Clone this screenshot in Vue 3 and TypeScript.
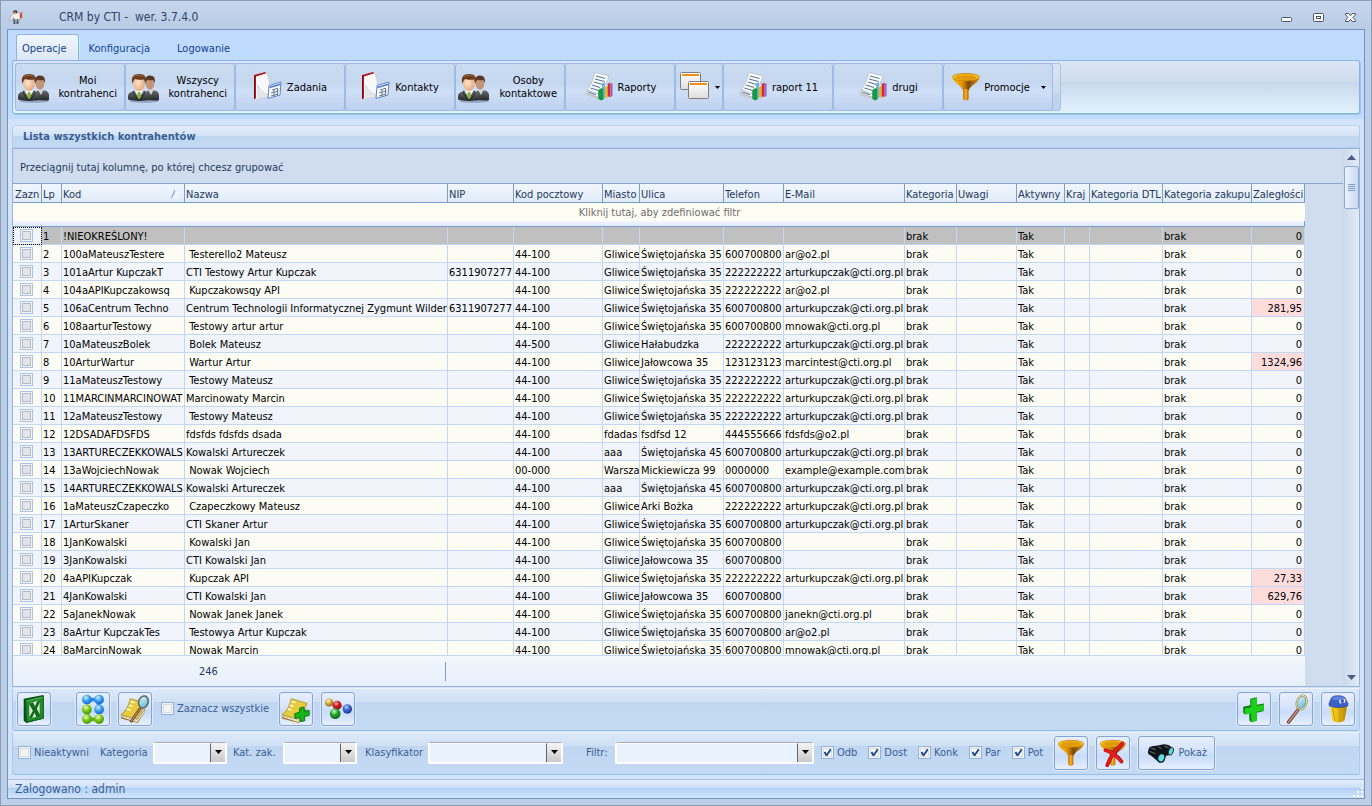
<script setup lang="ts">
import { ref } from 'vue'

interface Column { title: string; width: number }
interface RibbonItem { icon: string; lines: string[]; menu?: boolean; kind?: string }

const tabs = ['Operacje', 'Konfiguracja', 'Logowanie']
const activeTab = ref('Operacje')

const ribbon: RibbonItem[] = [
  { icon: 'people', lines: ['Moi', 'kontrahenci'], kind: 'wide' },
  { icon: 'people', lines: ['Wszyscy', 'kontrahenci'], kind: 'wide' },
  { icon: 'notebook', lines: ['Zadania'] },
  { icon: 'notebook', lines: ['Kontakty'] },
  { icon: 'people', lines: ['Osoby', 'kontaktowe'], kind: 'wide' },
  { icon: 'report', lines: ['Raporty'] },
  { icon: 'windows', lines: [], menu: true, kind: 'slim' },
  { icon: 'report', lines: ['raport 11'] },
  { icon: 'report', lines: ['drugi'] },
  { icon: 'funnel', lines: ['Promocje'], menu: true },
]

const columns: Column[] = [
  { title: 'Zazn', width: 29 },
  { title: 'Lp', width: 20 },
  { title: 'Kod', width: 123 },
  { title: 'Nazwa', width: 263 },
  { title: 'NIP', width: 66 },
  { title: 'Kod pocztowy', width: 89 },
  { title: 'Miasto', width: 37 },
  { title: 'Ulica', width: 84 },
  { title: 'Telefon', width: 60 },
  { title: 'E-Mail', width: 121 },
  { title: 'Kategoria', width: 52 },
  { title: 'Uwagi', width: 60 },
  { title: 'Aktywny', width: 48 },
  { title: 'Kraj', width: 25 },
  { title: 'Kategoria DTL', width: 73 },
  { title: 'Kategoria zakupu', width: 89 },
  { title: 'Zaległości', width: 53 },
]

const SW = 'Świętojańska 35'
const AK = 'arturkupczak@cti.org.pl'
const T2 = '222222222'
const T6 = '600700800'

// kod, nazwa, nip, kod pocztowy, miasto, ulica, telefon, e-mail, zaległości
const source: string[][] = [
  ['!NIEOKREŚLONY!', '', '', '', '', '', '', '', '0'],
  ['100aMateuszTestere', ' Testerello2 Mateusz', '', '44-100', 'Gliwice', SW, T6, 'ar@o2.pl', '0'],
  ['101aArtur KupczakT', 'CTI Testowy Artur Kupczak', '6311907277', '44-100', 'Gliwice', SW, T2, AK, '0'],
  ['104aAPIKupczakowsq', ' Kupczakowsqy API', '', '44-100', 'Gliwice', SW, T2, 'ar@o2.pl', '0'],
  ['106aCentrum Techno', 'Centrum Technologii Informatycznej Zygmunt Wilder', '6311907277', '44-100', 'Gliwice', SW, T6, AK, '281,95'],
  ['108aarturTestowy', ' Testowy artur artur', '', '44-100', 'Gliwice', SW, T6, 'mnowak@cti.org.pl', '0'],
  ['10aMateuszBolek', ' Bolek Mateusz', '', '44-500', 'Gliwice', 'Hałabudzka', T2, AK, '0'],
  ['10ArturWartur', ' Wartur Artur', '', '44-100', 'Gliwice', 'Jałowcowa 35', '123123123', 'marcintest@cti.org.pl', '1324,96'],
  ['11aMateuszTestowy', ' Testowy Mateusz', '', '44-100', 'Gliwice', SW, T2, AK, '0'],
  ['11MARCINMARCINOWAT', 'Marcinowaty Marcin', '', '44-100', 'Gliwice', SW, T2, AK, '0'],
  ['12aMateuszTestowy', ' Testowy Mateusz', '', '44-100', 'Gliwice', SW, T2, AK, '0'],
  ['12DSADAFDSFDS', 'fdsfds fdsfds dsada', '', '44-100', 'fdadas', 'fsdfsd 12', '444555666', 'fdsfds@o2.pl', '0'],
  ['13ARTURECZEKKOWALS', 'Kowalski Artureczek', '', '44-100', 'aaa', 'Świętojańska 45', T6, AK, '0'],
  ['13aWojciechNowak', ' Nowak Wojciech', '', '00-000', 'Warsza', 'Mickiewicza 99', '0000000', 'example@example.com', '0'],
  ['14ARTURECZEKKOWALS', 'Kowalski Artureczek', '', '44-100', 'aaa', 'Świętojańska 45', T6, AK, '0'],
  ['1aMateuszCzapeczko', ' Czapeczkowy Mateusz', '', '44-100', 'Gliwice', 'Arki Bożka', T2, AK, '0'],
  ['1ArturSkaner', 'CTI Skaner Artur', '', '44-100', 'Gliwice', SW, T6, AK, '0'],
  ['1JanKowalski', ' Kowalski Jan', '', '44-100', 'Gliwice', SW, T6, '', '0'],
  ['3JanKowalski', 'CTI Kowalski Jan', '', '44-100', 'Gliwice', 'Jałowcowa 35', T6, '', '0'],
  ['4aAPIKupczak', ' Kupczak API', '', '44-100', 'Gliwice', SW, T2, AK, '27,33'],
  ['4JanKowalski', 'CTI Kowalski Jan', '', '44-100', 'Gliwice', 'Jałowcowa 35', T6, '', '629,76'],
  ['5aJanekNowak', ' Nowak Janek Janek', '', '44-100', 'Gliwice', SW, T6, 'janekn@cti.org.pl', '0'],
  ['8aArtur KupczakTes', ' Testowya Artur Kupczak', '', '44-100', 'Gliwice', SW, T6, 'ar@o2.pl', '0'],
  ['8aMarcinNowak', ' Nowak Marcin', '', '44-100', 'Gliwice', SW, T6, 'mnowak@cti.org.pl', '0'],
]

const rows = source.map((r, i) => ({
  cells: [String(i + 1), ...r.slice(0, 8), 'brak', '', 'Tak', '', '', 'brak'],
  debt: r[8],
}))

const combos = [
  { label: 'Kategoria', kind: 'short' },
  { label: 'Kat. zak.', kind: 'short' },
  { label: 'Klasyfikator', kind: 'medium' },
  { label: 'Filtr:', kind: 'long' },
]
const kinds = ref([
  { label: 'Odb', on: true },
  { label: 'Dost', on: true },
  { label: 'Konk', on: true },
  { label: 'Par', on: true },
  { label: 'Pot', on: true },
])
</script>

<template>
  <svg class="sprite" aria-hidden="true">
    <defs>
      <linearGradient id="g-gold" x1="0" x2="1" y1="0" y2="0">
        <stop offset="0" stop-color="#f7b90c" /><stop offset=".35" stop-color="#e89508" /><stop offset=".6" stop-color="#7a4a08" /><stop offset="1" stop-color="#e8960c" />
      </linearGradient>
      <linearGradient id="g-rim" x1="0" x2="1" y1="0" y2="0">
        <stop offset="0" stop-color="#ffd21a" /><stop offset=".5" stop-color="#f4a90c" /><stop offset="1" stop-color="#ffc928" />
      </linearGradient>
      <linearGradient id="g-stem" x1="0" x2="1" y1="0" y2="0">
        <stop offset="0" stop-color="#c97004" /><stop offset=".5" stop-color="#ffb41c" /><stop offset="1" stop-color="#b86404" />
      </linearGradient>
      <linearGradient id="g-suit" x1="0" x2="0" y1="0" y2="1">
        <stop offset="0" stop-color="#6c6e70" /><stop offset="1" stop-color="#242628" />
      </linearGradient>
      <linearGradient id="g-win" x1="0" x2="0" y1="0" y2="1">
        <stop offset="0" stop-color="#fff" /><stop offset="1" stop-color="#dedede" />
      </linearGradient>
      <linearGradient id="g-bin" x1="0" x2="1" y1="0" y2="0">
        <stop offset="0" stop-color="#ffdc2e" /><stop offset=".5" stop-color="#e6b80f" /><stop offset="1" stop-color="#a97e07" />
      </linearGradient>
      <radialGradient id="g-face" cx=".4" cy=".45" r=".6">
        <stop offset="0" stop-color="#ffe6cf" /><stop offset="1" stop-color="#e5a87b" />
      </radialGradient>
      <radialGradient id="g-blue" cx=".4" cy=".3" r=".7">
        <stop offset="0" stop-color="#d9f2ff" /><stop offset=".45" stop-color="#43a6f5" /><stop offset="1" stop-color="#0d63cf" />
      </radialGradient>
      <radialGradient id="g-lime" cx=".4" cy=".3" r=".7">
        <stop offset="0" stop-color="#efffc9" /><stop offset=".45" stop-color="#86cf1d" /><stop offset="1" stop-color="#3f9208" />
      </radialGradient>
      <radialGradient id="g-red" cx=".4" cy=".3" r=".7">
        <stop offset="0" stop-color="#ffb5b5" /><stop offset=".45" stop-color="#d91c24" /><stop offset="1" stop-color="#8d0610" />
      </radialGradient>
      <radialGradient id="g-green" cx=".4" cy=".3" r=".7">
        <stop offset="0" stop-color="#cdfcc9" /><stop offset=".45" stop-color="#2aa92f" /><stop offset="1" stop-color="#0b6413" />
      </radialGradient>
      <radialGradient id="g-navy" cx=".4" cy=".3" r=".7">
        <stop offset="0" stop-color="#c5d5ff" /><stop offset=".45" stop-color="#3f66d0" /><stop offset="1" stop-color="#1a3590" />
      </radialGradient>
      <radialGradient id="g-tan" cx=".4" cy=".3" r=".7">
        <stop offset="0" stop-color="#fff4cf" /><stop offset=".45" stop-color="#d8b24a" /><stop offset="1" stop-color="#8e6a18" />
      </radialGradient>
      <linearGradient id="g-lens" x1="0" x2="1" y1="0" y2="1">
        <stop offset="0" stop-color="#e4fbff" /><stop offset="1" stop-color="#4fb2cf" />
      </linearGradient>
    </defs>

    <symbol id="people" viewBox="0 0 32 32">
      <ellipse cx="16" cy="30" rx="15" ry="1.700" fill="#5b6f8d" opacity=".5" />
      <path d="M16 29v-5c1-3.500 3-4.500 6-5h3c4 1 6 2 6 5.500v3.500c0 1-.5 1.500-2 1.500z" fill="url(#g-suit)" />
      <path d="M20 19l3 5 2.500-5z" fill="#d6d6d2" />
      <ellipse cx="22" cy="13" rx="4.300" ry="5.800" fill="#c39576" />
      <path d="M17.500 11C16.500 7 18.500 4.500 22 4.500c4 0 5.700 3 4.700 7.500L25 9c-2 .5-4 .5-5-.5z" fill="#5a3724" />
      <path d="M0 28.500V26c0-4 2-5 7-6h8c5 1 6.500 2 6.500 6v2.800c-6 1.500-15 1.500-21.500-.3z" fill="url(#g-suit)" />
      <path d="M6.500 19.500L11 28l4.500-8.500z" fill="#f6f6f2" />
      <path d="M10 21h2.200l1 4.500-2.100 3-2.100-3z" fill="#87ad3c" />
      <path d="M6 19.500l-1 2 5 7.500M16 19.500l1 2-5 7.500" fill="none" stroke="#222" stroke-width=".8" />
      <ellipse cx="11" cy="12.500" rx="5.900" ry="7.500" fill="url(#g-face)" />
      <path d="M4.500 13C2.500 6 5.500 3 11 3s8.500 3 6.500 10l-1.500-4.500c-4 .7-7 .3-9-.5-1 1.300-2 2.700-2.500 5z" fill="#6b3d20" />
      <path d="M6 5.800c2-1.700 6-2 9 0" fill="none" stroke="#a36b3f" />
    </symbol>

    <symbol id="notebook" viewBox="0 0 32 32">
      <path d="M1 4l11-3 1.500 1.500L3.500 6v21L1 28z" fill="#b3161b" />
      <path d="M1 4l1 .6V28l-1 .3z" fill="#7d0c12" />
      <path d="M3 5.500L13.500 2.200c2 3 3 8 3.500 14l1 9L3 28z" fill="#f8f8f8" />
      <path d="M13.500 2.200c2 3 3 8 3.500 14l1 9L3 28" fill="none" stroke="#b9bdc4" stroke-width=".6" />
      <path d="M4 15c3 6 7 9 13 10L4 28z" fill="#e2e4e8" />
      <path d="M4.500 14c3 6 6.500 9 12 10" fill="none" stroke="#b5b9c0" stroke-width=".7" />
      <path d="M16 14.500L28 11l-1 13-12 3.500z" fill="#f9fbff" stroke="#5f83c8" />
      <path d="M16.500 16.500L27.500 13.300" stroke="#4a78cc" stroke-width="1.600" />
      <path d="M19 19l6-1.800M21 18.500v7M24.500 17.500v7M18 22l7.500-2M18 25l7-2" stroke="#68788d" fill="none" stroke-width="1" />
    </symbol>

    <symbol id="report" viewBox="0 0 32 32">
      <path d="M1 24l15 5 9-8-14-6z" fill="#c9ccd1" />
      <path d="M2 22l15 5 8-9-15-5z" fill="#fff" stroke="#a9adb4" stroke-width=".7" />
      <path d="M3 19l15 5 7-10-14-4z" fill="#fff" stroke="#a9adb4" stroke-width=".7" />
      <path d="M11 1.500L25 5l-1 3-7 16L3 18.500C8 14 9 8 11 1.500z" fill="#fdfdfd" stroke="#b4b8bf" stroke-width=".7" />
      <path d="M12 5l9.500 2.500M11 8l9.500 2.500M10 11l8.500 2.500M8 14l8 2.500M6.500 17l8 2.500M4 21l8 2.800" stroke="#56789d" stroke-width="1.200" />
      <path d="M14.500 19l3-1.800V29l-3-1.500z" fill="#149a48" /><path d="M17.500 17l1.800 1v10.500l-1.800.5z" fill="#0b6b32" />
      <path d="M18 12.500l3-1.500v17l-3-2z" fill="#6bb4e4" />
      <path d="M14.500 19l3-1.800 1.800.8V28l-2 1.500-2.800-1.500z" fill="#149a48" />
      <path d="M21 16l2.700-1.500V27L21 26z" fill="#f0b414" />
      <path d="M23.700 13l2.800-1.500V26l-2.800-.5z" fill="#d4283b" />
      <path d="M26.500 13l2-1v13l-2 .8z" fill="#9a5fc4" />
    </symbol>

    <symbol id="windows" viewBox="0 0 32 32">
      <rect x="1.500" y="1.500" width="20" height="17" rx="1" fill="url(#g-win)" stroke="#7d7d80" />
      <path d="M3 4h17" stroke="#ef8f1a" stroke-width="2" />
      <rect x="9.500" y="10.500" width="20" height="17" rx="1" fill="url(#g-win)" stroke="#7d7d80" />
      <path d="M11 13h17" stroke="#ef8f1a" stroke-width="2" />
    </symbol>

    <symbol id="funnel" viewBox="0 0 32 32">
      <path d="M2.500 7c1 5 9 7 10.800 13v8c1 1.700 4 1.700 5 0v-8C20 14 28.500 12 29.500 7z" fill="url(#g-gold)" />
      <path d="M13.300 18h5v10.500c-1 1-4 1-5 0z" fill="url(#g-stem)" />
      <ellipse cx="16" cy="6.200" rx="13.500" ry="3.700" fill="url(#g-rim)" stroke="#b87509" stroke-width=".7" />
      <ellipse cx="16" cy="6.600" rx="11" ry="2.400" fill="#e09a10" />
    </symbol>

    <symbol id="funnel-off" viewBox="0 0 32 32">
      <use href="#funnel" width="32" height="32" />
      <path d="M10 29C12 23 18 13 26 6" fill="none" stroke="#9a0b0b" stroke-width="4" stroke-linecap="round" />
      <path d="M8 13c5 1 12 6 17 12" fill="none" stroke="#9a0b0b" stroke-width="4" stroke-linecap="round" />
      <path d="M10 29C12 23 18 13 26 6M8 13c5 1 12 6 17 12" fill="none" stroke="#ee1c1c" stroke-width="2.600" stroke-linecap="round" />
    </symbol>

    <symbol id="excel" viewBox="0 0 32 32">
      <path d="M5 5L26 1v25L8 31l-3-2.500z" fill="#0a4d10" />
      <path d="M7 6.500L26 2v24L8 30z" fill="#1f8b2a" stroke="#0d5c17" />
      <path d="M11 9.500l11-2.700v16.500l-11 3z" fill="#dcefd8" />
      <path d="M10.500 10l4.500-1.100 2 4.100 2.500-5.200 3.500-1-4 8.800 4 7.800-4.500 1-2-4.500-2.500 5.700-4 .9 4.800-8.600z" fill="#136a1f" />
      <path d="M8 7.500l17-4" stroke="#6cc86f" stroke-width=".8" />
    </symbol>

    <symbol id="nodes" viewBox="0 0 32 32">
      <path d="M10 6h12v10" fill="none" stroke="#2f8be8" stroke-width="4" />
      <path d="M10 16v11h12" fill="none" stroke="#62b013" stroke-width="4" />
      <circle cx="9.500" cy="6" r="5.200" fill="url(#g-blue)" /><circle cx="22.500" cy="6" r="5.200" fill="url(#g-blue)" />
      <circle cx="22.500" cy="16.500" r="5.200" fill="url(#g-blue)" /><circle cx="9.500" cy="16.500" r="5.200" fill="url(#g-lime)" />
      <circle cx="9.500" cy="26.700" r="5.200" fill="url(#g-lime)" /><circle cx="22.500" cy="26.700" r="5.200" fill="url(#g-lime)" />
    </symbol>

    <symbol id="book" viewBox="0 0 32 32">
      <path d="M1 23l17 6 9-14v3l-8 13-18-5z" fill="#9a7420" />
      <path d="M1.500 24l17 5.500 8-12" fill="none" stroke="#fff7d8" />
      <path d="M11 5l17 5-10 17L1 22c5-3 8-9 10-17z" fill="#e8cb3c" stroke="#a5841d" stroke-width=".8" />
      <path d="M11.500 8l4 1.200M9.500 12l4 1.200M7.500 16l4 1.200" stroke="#fffdf0" stroke-width="1.500" />
    </symbol>

    <symbol id="glass" viewBox="0 0 32 32">
      <path d="M18 17L8 30" stroke="#6d4234" stroke-width="3.600" stroke-linecap="round" />
      <path d="M18 17L8 30" stroke="#c69582" stroke-width="1.600" stroke-linecap="round" />
      <ellipse cx="22" cy="9" rx="5" ry="7.500" transform="rotate(18 22 9)" fill="url(#g-lens)" stroke="#7d7a52" stroke-width="2.200" />
      <ellipse cx="22" cy="9" rx="5" ry="7.500" transform="rotate(18 22 9)" fill="none" stroke="#f2e6b4" />
    </symbol>

    <symbol id="book-search" viewBox="0 0 32 32">
      <use href="#book" width="32" height="32" />
      <path d="M21 16L12 29" stroke="#5d3a2c" stroke-width="3" stroke-linecap="round" />
      <path d="M21 16L12 29" stroke="#c2917c" stroke-width="1.200" stroke-linecap="round" />
      <ellipse cx="25" cy="8.500" rx="5" ry="6.500" transform="rotate(18 25 8.500)" fill="url(#g-lens)" stroke="#5f6e6c" stroke-width="1.800" />
    </symbol>

    <symbol id="book-add" viewBox="0 0 32 32">
      <use href="#book" width="32" height="32" />
      <path d="M20 15l4.500-1 .5 4.500 5-1v5.500l-5 1 .5 4.500-5 1-.5-4.500-5 1-.5-5 5-1.500z" fill="#17b417" stroke="#0c6d10" />
    </symbol>

    <symbol id="molecule" viewBox="0 0 32 32">
      <path d="M8 9l9 3-3 9M17 12l11 4" stroke="#b9bdc4" stroke-width="2" fill="none" />
      <circle cx="6.500" cy="9" r="4.300" fill="url(#g-tan)" />
      <circle cx="15" cy="12" r="4.800" fill="url(#g-red)" />
      <circle cx="26" cy="16" r="5" fill="url(#g-navy)" />
      <circle cx="13" cy="21" r="5.700" fill="url(#g-green)" />
    </symbol>

    <symbol id="plus" viewBox="0 0 32 32">
      <path d="M12 5l7-1.500v8l7.500-1.500v8L19 20v8.500L13 30l-2-2v-7.500L6 21.500 4.500 20v-6.500l7.500-1.500z" fill="#0a7a10" />
      <path d="M13 5.500l6-1.300v8.600l7.500-1.600v6.300L19 19v9.500l-6 1.300V20.500L6 22v-6.500L13 14z" fill="#1ed01e" />
    </symbol>

    <symbol id="bin" viewBox="0 0 32 32">
      <path d="M7 11h19l-3 17c-3 3-10 3-13 0z" fill="url(#g-bin)" />
      <path d="M10.500 15l2 13.500M18 16l-.5 14" stroke="#b88c0a" stroke-width=".8" />
      <path d="M6.500 10L9 4c3-3 11-3 14.500 0l3 6v2.500c-5 2.500-15 2.500-20 0z" fill="#3d5fc8" stroke="#24419a" stroke-width=".7" />
      <path d="M9.500 4.500c4-2.500 10-2.500 13.500 0L20 6.500h-9z" fill="#6384dc" />
      <path d="M19 6.500c-2 1-1 3.500.5 3M22 5.500c2 .5 1.500 3.500 0 3.500" fill="none" stroke="#fff" stroke-width="1.300" />
    </symbol>

    <symbol id="binoculars" viewBox="0 0 32 32">
      <path d="M3 12c0-3 3-4 6-4l6-1 5-1c4 0 7 1 9 3l2 3-2 6-6 1-2 6c-2 3-6 3-8 0l-7-6c-3-1-5-3-3-7z" fill="#101418" />
      <path d="M5 10l6 2M4 14l7 3M14 9l4 2M21 8l5 2" stroke="#5e6a76" stroke-width="1.200" />
      <ellipse cx="17" cy="21.500" rx="4.200" ry="5" transform="rotate(20 17 21.500)" fill="#17222b" />
      <ellipse cx="17.500" cy="21.500" rx="3.200" ry="4.200" transform="rotate(20 17.500 21.500)" fill="#5fe0e4" />
      <ellipse cx="28.500" cy="14" rx="2.600" ry="4.600" transform="rotate(20 28.500 14)" fill="#5fe0e4" stroke="#17222b" />
    </symbol>

    <symbol id="person" viewBox="0 0 16 16">
      <path d="M4.500 5c1.500-2 5-2.500 7-1l2.500-1v6l-2.500 1v3H5l1-5-4 4-1-1z" fill="#f4f4f2" stroke="#9a9da3" stroke-width=".7" />
      <path d="M5 3.500C5 .5 9.500.5 9.500 3c0 2-3 2.500-4.500.5z" fill="#4a3426" />
      <path d="M6 3c1-.5 3 0 2.500 2-1 1-2.500.5-2.500-2z" fill="#d89c74" />
      <path d="M5.500 10h2v5h-2zM8.500 10h2v5h-2z" fill="#4d6076" />
      <path d="M11.800 4.500l2.200-1v5.200l-2.200.8z" fill="#e0481e" />
    </symbol>
  </svg>

  <main class="window">
    <header class="titlebar">
      <svg class="app-icon" aria-hidden="true"><use href="#person" /></svg>
      <h1>CRM by CTI -&nbsp; wer. 3.7.4.0</h1>
      <button type="button" aria-label="Minimalizuj">
        <svg viewBox="0 0 12 12"><rect x=".5" y="6.500" width="10" height="4" rx="1" fill="#fff" stroke="#4b5567" /></svg>
      </button>
      <button type="button" aria-label="Maksymalizuj">
        <svg viewBox="0 0 12 12"><rect x=".5" y="2.500" width="10" height="8" rx="1" fill="#fff" stroke="#4b5567" /><rect x="3.500" y="5.500" width="4" height="2" fill="#fff" stroke="#4b5567" /></svg>
      </button>
      <button type="button" aria-label="Zamknij">
        <svg viewBox="0 0 12 12"><path d="M.5 2.500h3.200L5.500 4.700l1.800-2.200h3.200v1.300L8 6.500l2.500 2.700v1.300H7.300L5.500 8.300l-1.800 2.200H.5V9.200L3 6.500.5 3.800z" fill="#fff" stroke="#4b5567" /></svg>
      </button>
    </header>

    <div class="frame">
      <section class="ribbon">
        <nav class="tabs">
          <button v-for="t in tabs" :key="t" type="button" :class="{ active: t === activeTab }" @click="activeTab = t">{{ t }}</button>
        </nav>
        <div class="ribbon-panel">
          <div class="ribbon-group">
            <button v-for="(item, i) in ribbon" :key="i" type="button" :class="['tool', item.kind]" :aria-label="item.lines.join(' ') || 'Okna'">
              <svg class="icon" aria-hidden="true"><use :href="'#' + item.icon" /></svg>
              <span v-if="item.lines.length" class="tool-text"><span v-for="l in item.lines" :key="l">{{ l }}</span></span>
              <svg v-if="item.menu" class="caret" viewBox="0 0 5 3" aria-hidden="true"><path d="M0 0h5L2.500 3z" /></svg>
            </button>
          </div>
        </div>
      </section>

      <div class="workspace">
        <h2 class="caption">Lista wszystkich kontrahentów</h2>

        <section class="grid">
          <div class="grid-main">
            <div class="group-panel">Przeciągnij tutaj kolumnę, po której chcesz grupować</div>
            <div class="grid-view">
              <table>
                <colgroup><col v-for="c in columns" :key="c.title" :style="{ width: c.width + 'px' }" /></colgroup>
                <thead>
                  <tr class="head">
                    <th v-for="c in columns" :key="c.title" scope="col">
                      <div class="head-cell">
                        <span>{{ c.title }}</span>
                        <svg v-if="c.title === 'Kod'" class="sort" viewBox="0 0 8 8" aria-hidden="true"><path d="M4.500 0L7.500 7.500H.5" fill="none" stroke="#f8fbff" /><path d="M.5 8L4 0" stroke="#6f93c4" /></svg>
                      </div>
                    </th>
                  </tr>
                  <tr class="filter"><td :colspan="columns.length">Kliknij tutaj, aby zdefiniować filtr</td></tr>
                  <tr class="strip"><td :colspan="columns.length"></td></tr>
                </thead>
                <tbody>
                  <tr v-for="(r, i) in rows" :key="i" :class="{ selected: i === 0 }">
                    <td class="pick"><input type="checkbox" class="cell-check" :aria-label="'Zaznacz ' + r.cells[1]" /></td>
                    <td v-for="(c, j) in r.cells" :key="j">{{ c }}</td>
                    <td class="num" :class="{ due: r.debt !== '0' }">{{ r.debt }}</td>
                  </tr>
                </tbody>
              </table>
            </div>
            <div class="grid-footer"><span class="count">246</span></div>
          </div>
          <div class="scrollbar" aria-hidden="true">
            <svg viewBox="0 0 9 5"><path d="M0 5h9L4.500 0z" fill="#4a5c86" /></svg>
            <div class="thumb"><i></i><i></i><i></i><i></i></div>
            <svg viewBox="0 0 9 5"><path d="M0 0h9L4.500 5z" fill="#4a5c86" /></svg>
          </div>
        </section>

        <section class="bar actions">
          <button type="button" class="sq" aria-label="Eksport do Excela"><svg class="icon"><use href="#excel" /></svg></button>
          <button type="button" class="sq after-excel" aria-label="Grupy"><svg class="icon"><use href="#nodes" /></svg></button>
          <button type="button" class="sq" aria-label="Podgląd kartoteki"><svg class="icon"><use href="#book-search" /></svg></button>
          <label class="check all"><input type="checkbox" />Zaznacz wszystkie</label>
          <button type="button" class="sq" aria-label="Dodaj kartotekę"><svg class="icon"><use href="#book-add" /></svg></button>
          <button type="button" class="sq" aria-label="Powiązania"><svg class="icon"><use href="#molecule" /></svg></button>
          <button type="button" class="sq push" aria-label="Dodaj"><svg class="icon"><use href="#plus" /></svg></button>
          <button type="button" class="sq" aria-label="Szukaj"><svg class="icon"><use href="#glass" /></svg></button>
          <button type="button" class="sq" aria-label="Usuń"><svg class="icon"><use href="#bin" /></svg></button>
        </section>

        <section class="bar filters">
          <label class="check inactive"><input type="checkbox" />Nieaktywni</label>
          <label v-for="c in combos" :key="c.label" :class="['field', c.kind]">
            <span class="field-label">{{ c.label }}</span>
            <span class="combo">
              <select><option></option></select>
              <span class="drop" aria-hidden="true"><svg viewBox="0 0 7 4"><path d="M0 0h7L3.500 4z" /></svg></span>
            </span>
          </label>
          <div class="kinds">
            <label v-for="k in kinds" :key="k.label" class="check"><input v-model="k.on" type="checkbox" />{{ k.label }}</label>
          </div>
          <div class="filter-buttons">
            <button type="button" class="sq" aria-label="Filtruj"><svg class="icon"><use href="#funnel" /></svg></button>
            <button type="button" class="sq" aria-label="Wyczyść filtr"><svg class="icon"><use href="#funnel-off" /></svg></button>
            <button type="button" class="sq show"><svg class="icon"><use href="#binoculars" /></svg>Pokaż</button>
          </div>
        </section>
      </div>

      <footer class="status">
        <span>Zalogowano : admin</span>
        <svg class="grip" viewBox="0 0 11 11" aria-hidden="true">
          <path d="M8 0h2v2H8zM4 4h2v2H4zM8 4h2v2H8zM0 8h2v2H0zM4 8h2v2H4zM8 8h2v2H8z" fill="#fff" />
        </svg>
      </footer>
    </div>
  </main>
</template>

<style>
body { margin: 0; }
</style>

<style scoped>
.sprite { position: absolute; width: 0; height: 0; }
.window, .window button, .window select, .window input { font-family: "DejaVu Sans Condensed", "Noto Sans", sans-serif; font-size: 11px; }
.window {
  box-sizing: border-box; height: 100vh; min-height: 480px; display: flex; flex-direction: column;
  padding: 0 6px 6px; border: 1px solid #8b9bb0; background: #bccfe8; color: #1e395b; line-height: 13px; overflow: hidden;
}
button { margin: 0; padding: 0; border: 0; background: none; color: inherit; line-height: inherit; }

.titlebar { display: flex; align-items: center; gap: 20px; height: 28px; padding: 0 7px; margin: 0 -6px; background: linear-gradient(#c6d6ec, #b9cce6); flex: none; }
.titlebar h1 { flex: 1; margin: 4px 0 0 15px; font-size: 12px; line-height: 16px; font-weight: normal; color: #2f4468; }
.app-icon { width: 16px; height: 16px; margin-top: 4px; }
.titlebar button { width: 12px; height: 12px; margin-top: 4px; }
.titlebar button svg { display: block; width: 12px; height: 12px; }
.titlebar button:last-child { margin-right: 7px; }

.frame { flex: 1; min-height: 0; display: flex; flex-direction: column; border: 1px solid #7593b8; background: #d3e4fa; }
.ribbon { background: #bfdbff; padding: 0 4px 5px; flex: none; }
.tabs { display: flex; align-items: flex-end; height: 30px; padding-left: 4px; }
.tabs button { height: 26px; padding: 2px 6px 0; margin-right: 15px; color: #15428b; }
.tabs button.active { padding: 1px 11px 0 5px; margin-right: 4px; border: 1px solid #8db2e3; border-bottom: 0; border-radius: 3px 3px 0 0; background: linear-gradient(#f1f6fd, #dce8f6); box-shadow: 1px 0 0 #b6f2ff; }
.ribbon-panel { display: flex; height: 54px; box-sizing: border-box; padding: 2px; border: 1px solid #8db2e3; border-bottom-color: #84b4cc; border-radius: 3px; background: linear-gradient(#dbe6f4, #cfdded 40%, #c9d9ed 41%, #e0f1fd); box-shadow: 1px 1px 0 #a6c4ea, inset 0 -1px 0 #dcfaff; }
.ribbon-group { display: flex; height: 48px; box-sizing: border-box; padding-right: 7px; border: 1px solid #aac4e4; border-left: 0; border-radius: 3px; background: linear-gradient(#dbe6f4, #c9d9ed 66%, #bdd3ee 67%); }
.tool { display: flex; align-items: center; justify-content: center; gap: 2px; width: 110px; height: 48px; margin-top: -1px; box-sizing: border-box; border: 1px solid #9cbce6; border-radius: 3px; background: linear-gradient(#cadcf0, #c5d8f0 40%, #cfdff7 60%, #bdd1ee); color: #000; }
.tool.wide { justify-content: space-between; padding: 0 7px 0 2px; }
.tool.slim { width: 48px; }
.icon { width: 32px; height: 32px; flex: none; }
.tool-text { display: flex; flex-direction: column; text-align: center; }
.caret { width: 5px; height: 3px; margin-left: 2px; flex: none; }
.tool-text + .caret { margin-left: 9px; }

.workspace { flex: 1; min-height: 0; display: flex; flex-direction: column; gap: 1px; padding: 6px 4px 4px; }
.caption { margin: 0 0 -1px; padding: 0 10px; height: 23px; box-sizing: border-box; border: 1px solid #b3cdec; border-top-color: #c3d5ea; border-radius: 3px 3px 0 0; font-size: 11px; line-height: 21px; color: #3b5e92; background: linear-gradient(#e3edf9, #d3e3f6 48%, #c0d7f2 50%, #c3d9f3); flex: none; }

.grid { flex: 1; min-height: 0; display: flex; border: 1px solid #9ab2d4; background: #d0ddee; }
.grid-main { flex: 1; min-width: 0; display: flex; flex-direction: column; overflow: hidden; }
.group-panel { height: 34px; padding-left: 7px; line-height: 38px; border-bottom: 1px solid #8ba5c8; color: #1e395b; flex: none; }
.grid-view { flex: 1; min-height: 0; overflow: hidden; }
table { width: 1292px; table-layout: fixed; border-collapse: separate; border-spacing: 0; }
th, td { box-sizing: border-box; overflow: hidden; white-space: pre; padding: 2px 0 0 1px; text-align: left; font-weight: normal; }
th { height: 19px; border-right: 1px solid #7f9cc4; border-bottom: 1px solid #7f9cc4; background: linear-gradient(#f1f6fd, #e0ebf8); color: #1e395b; }
th:first-child { padding-left: 2px; }
.head-cell { display: flex; justify-content: space-between; align-items: center; overflow: hidden; }
.sort { width: 8px; height: 8px; margin-right: 5px; flex: none; }
.filter td { height: 18px; padding-top: 0; background: #fdfdf4; color: #6d6d6d; text-align: center; }
.strip td { height: 6px; padding: 0; border-bottom: 1px solid #7f9cc4; border-right: 1px solid #7f9cc4; background: linear-gradient(#f1f6fd, #e0ebf8); line-height: 0; font-size: 0; }
tbody td { height: 18px; border-right: 1px solid #c2d7f2; border-bottom: 1px solid #c2d7f2; background: #fcfcf4; color: #000; }
tbody tr:nth-child(odd) td { background: #f1f5fb; }
tbody tr.selected td { background: #c0c0c0; }
tbody tr.selected td.pick { background: #f1f5fb; outline: 1px dotted #000; outline-offset: -1px; }
tbody td.pick { padding: 0; text-align: center; line-height: 0; }
tbody td.num { text-align: right; padding: 2px 2px 0 0; }
tbody tr td.due, tbody tr:nth-child(odd) td.due { background: #ffdcdc; }
input[type="checkbox"] { appearance: none; width: 13px; height: 13px; margin: 0; box-sizing: border-box; border: 1px solid #8fb1dc; background: #f3f3f0; box-shadow: inset 0 0 0 1px #f4f4f4, inset 0 0 0 2px #d8dbe0; flex: none; }
input.cell-check { border-color: #a9c4e6; background: #e2e4e8; box-shadow: inset 0 0 0 1px #f1f6fc, inset 0 0 0 2px #b4b9c2; margin-right: 1px; }
input[type="checkbox"]:checked { background: #f6f8fa url("data:image/svg+xml,%3Csvg xmlns='http://www.w3.org/2000/svg' viewBox='0 0 11 11'%3E%3Cpath d='M2.500 5l2 3.500L9 2' fill='none' stroke='%231c4a94' stroke-width='2'/%3E%3C/svg%3E"); }

.grid-footer { width: 1292px; height: 31px; box-sizing: border-box; display: flex; align-items: center; border-top: 1px solid #c2d7f2; background: linear-gradient(#f3f7fd, #e6effa); flex: none; }
.count { box-sizing: border-box; width: 433px; padding-left: 186px; line-height: 19px; border-right: 1px solid #7f9cc4; }

.scrollbar { width: 16px; display: flex; flex-direction: column; align-items: center; padding: 6px 0; background: linear-gradient(90deg, #cbdaec, #e2ebf6); flex: none; }
.scrollbar svg { width: 9px; height: 5px; }
.scrollbar svg:last-child { margin-top: auto; }
.thumb { box-sizing: border-box; width: 15px; height: 43px; margin-top: 6px; display: flex; flex-direction: column; justify-content: center; align-items: center; gap: 1px; border: 1px solid #8ea9d2; border-radius: 2px; background: linear-gradient(90deg, #eaf2fc, #c8d9f0); }
.thumb i { width: 7px; height: 1px; background: #7f9cc4; }

.bar { display: flex; align-items: center; height: 43px; box-sizing: border-box; border: 1px solid #a9cbee; border-top-color: #eaf3fd; border-bottom-color: #94c0e6; border-radius: 3px; background: linear-gradient(#dde9f8, #cfe0f5 32%, #c0d6f1 33%, #c3d9f4); color: #3b5e92; flex: none; }
.actions { gap: 8px; padding: 0 4px 2px; }
.sq { display: flex; align-items: center; justify-content: center; width: 34px; height: 34px; box-sizing: border-box; border: 1px solid #86a4d2; border-radius: 3px; background: linear-gradient(#e8effc, #d4e3fb 45%, #c9dcfa 60%, #e6effe); box-shadow: 0 0 0 1px #dfebfa; flex: none; }
.sq .icon { width: 30px; height: 30px; }
.after-excel { margin-left: 17px; }
.push { margin-left: auto; }
.check { display: flex; align-items: center; gap: 3px; white-space: nowrap; }
.check.all { width: 110px; margin-left: 1px; }
.filters { padding: 0 5px 2px; }
.check.inactive { width: 82px; }
.field { display: flex; align-items: center; }
.field-label { width: 53px; }
.field.short + .field.short .field-label { width: 50px; }
.field.short + .field.short { margin-left: 6px; }
.field.medium { margin-left: 8px; }
.medium .field-label { width: 63px; }
.long .field-label { width: 29px; }
.field.long { margin-left: 23px; }
.combo { display: flex; box-sizing: border-box; width: 74px; height: 22px; border: 2px solid #fff; border-top: 1px solid #a3acb8; border-radius: 2px; background: #e9f2fd; }
.medium .combo { width: 135px; }
.long .combo { width: 199px; }
select { appearance: none; flex: 1; min-width: 0; padding: 0; border: 0; border-right: 1px solid #5e6672; border-top: 1px solid #fff; background: #e9f2fd; color: #000; }
.drop { display: flex; align-items: center; justify-content: center; width: 14px; background: linear-gradient(#f4f4f4, #c9c9c9); }
.drop svg { width: 7px; height: 4px; }
.kinds { display: flex; gap: 11px; margin-left: 7px; }
.filter-buttons { display: flex; gap: 8px; margin-left: 11px; }
.sq.show { width: 77px; gap: 4px; }
.sq.show .icon { width: 28px; height: 28px; }

.status { display: flex; justify-content: space-between; height: 19px; padding-left: 7px; box-sizing: border-box; border-top: 1px solid #a5bcdc; background: linear-gradient(#e3edfa, #cfe1f8 40%, #b4d1f5 45%, #d0e4fc); color: #3b5e92; line-height: 18px; font-size: 12px; flex: none; }
.grip { width: 11px; height: 11px; align-self: flex-end; }
</style>
